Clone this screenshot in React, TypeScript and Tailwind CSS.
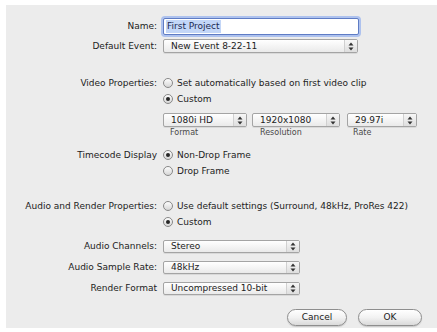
import React from "react";

interface RowProps {
    label?: string;
    className?: string;
    children?: React.ReactNode;
}

function Row({ label, className, children }: RowProps) {
    return (
        <div className={"flex items-center " + (className ?? "")}>
            <div className="w-[151px] shrink-0 text-right whitespace-nowrap">{label}</div>
            <div className="ml-[6px] flex items-center">{children}</div>
        </div>
    );
}

function Stepper() {
    return (
        <svg width="6" height="9" viewBox="0 0 6 9">
            <path d="M3 0.5 L5.5 3.5 L0.5 3.5 Z" fill="#333" />
            <path d="M3 8.5 L5.5 5.5 L0.5 5.5 Z" fill="#333" />
        </svg>
    );
}

interface PopupProps {
    value: string;
    width: string;
    height?: string;
}

function Popup({ value, width, height = "h-[14px]" }: PopupProps) {
    return (
        <div
            className={
                "flex items-stretch rounded-[2px] border border-[#a4a4a4] bg-gradient-to-b from-white to-[#eaeaea] shadow-[0_1px_0_rgba(0,0,0,0.08)] " +
                width +
                " " +
                height
            }
        >
            <div className="flex-1 flex items-center pl-[7px] text-[9px] leading-none text-[#222] whitespace-nowrap overflow-hidden">
                {value}
            </div>
            <div className="w-[13px] flex items-center justify-center border-l border-[#d0d0d0] bg-gradient-to-b from-[#f7f7f7] to-[#dedede]">
                <Stepper />
            </div>
        </div>
    );
}

function Radio({ checked, label }: { checked?: boolean; label: string }) {
    return (
        <div className="flex items-center h-[16px]">
            <div className="w-[10px] h-[10px] rounded-full border border-[#888] bg-gradient-to-b from-[#fdfdfd] to-[#d6d6d6] flex items-center justify-center">
                {checked && <div className="w-[4px] h-[4px] rounded-full bg-[#262626]" />}
            </div>
            <span className="ml-[4px] whitespace-nowrap">{label}</span>
        </div>
    );
}

function Button({ label, width }: { label: string; width: string }) {
    return (
        <div
            className={
                "h-[17px] rounded-full border border-[#8e8e8e] bg-gradient-to-b from-white via-[#f2f2f2] to-[#dadada] flex items-center justify-center text-[9px] text-[#222] shadow-[0_1px_1px_rgba(0,0,0,0.15)] " +
                width
            }
        >
            {label}
        </div>
    );
}

export default function App() {
    return (
        <div className="w-[437px] h-[332px] bg-white pt-[5px] pl-[6px] font-['DejaVu_Sans',sans-serif] text-[9px] leading-none text-[#222] overflow-hidden">
            <div className="w-[431px] h-[323px] bg-[#ececec] flex flex-col">
                {/* Name */}
                <Row label="Name:" className="mt-[13px] h-[17px]">
                    <div className="w-[196px] h-[17px] rounded-[2px] border border-[#5f7cc4] bg-white shadow-[0_0_0_2px_#aec2ee] flex items-center pl-[2px]">
                        <span className="bg-[#c3d6f7] text-[#1b2a52] px-[1px] py-[2px]">First Project</span>
                    </div>
                </Row>

                {/* Default event */}
                <Row label="Default Event:" className="mt-[4px] h-[14px]">
                    <Popup value="New Event 8-22-11" width="w-[195px]" />
                </Row>

                {/* Video properties */}
                <Row label="Video Properties:" className="mt-[22px] h-[16px]">
                    <Radio label="Set automatically based on first video clip" />
                </Row>
                <Row className="h-[16px]">
                    <Radio checked label="Custom" />
                </Row>
                <Row className="mt-[6px] h-[14px]">
                    <Popup value="1080i HD" width="w-[84px]" />
                    <div className="ml-[5px]">
                        <Popup value="1920x1080" width="w-[88px]" />
                    </div>
                    <div className="ml-[7px]">
                        <Popup value="29.97i" width="w-[70px]" />
                    </div>
                </Row>
                <Row className="h-[12px] text-[8px] text-[#4a4a4a]">
                    <div className="w-[84px] pl-[7px]">Format</div>
                    <div className="w-[88px] ml-[5px] pl-[8px]">Resolution</div>
                    <div className="w-[70px] ml-[7px] pl-[6px]">Rate</div>
                </Row>

                {/* Timecode */}
                <Row label="Timecode Display" className="mt-[8px] h-[16px]">
                    <Radio checked label="Non-Drop Frame" />
                </Row>
                <Row className="h-[16px]">
                    <Radio label="Drop Frame" />
                </Row>

                {/* Audio and render */}
                <Row label="Audio and Render Properties:" className="mt-[19px] h-[16px]">
                    <Radio label="Use default settings (Surround, 48kHz, ProRes 422)" />
                </Row>
                <Row className="h-[16px]">
                    <Radio checked label="Custom" />
                </Row>

                <Row label="Audio Channels:" className="mt-[10px] h-[13px]">
                    <Popup value="Stereo" width="w-[137px]" height="h-[13px]" />
                </Row>
                <Row label="Audio Sample Rate:" className="mt-[8px] h-[13px]">
                    <Popup value="48kHz" width="w-[137px]" height="h-[13px]" />
                </Row>
                <Row label="Render Format" className="mt-[8px] h-[13px]">
                    <Popup value="Uncompressed 10-bit" width="w-[137px]" height="h-[13px]" />
                </Row>

                {/* Buttons */}
                <div className="mt-[14px] flex justify-end pr-[15px] gap-[11px]">
                    <Button label="Cancel" width="w-[60px]" />
                    <Button label="OK" width="w-[64px]" />
                </div>
            </div>
        </div>
    );
}
